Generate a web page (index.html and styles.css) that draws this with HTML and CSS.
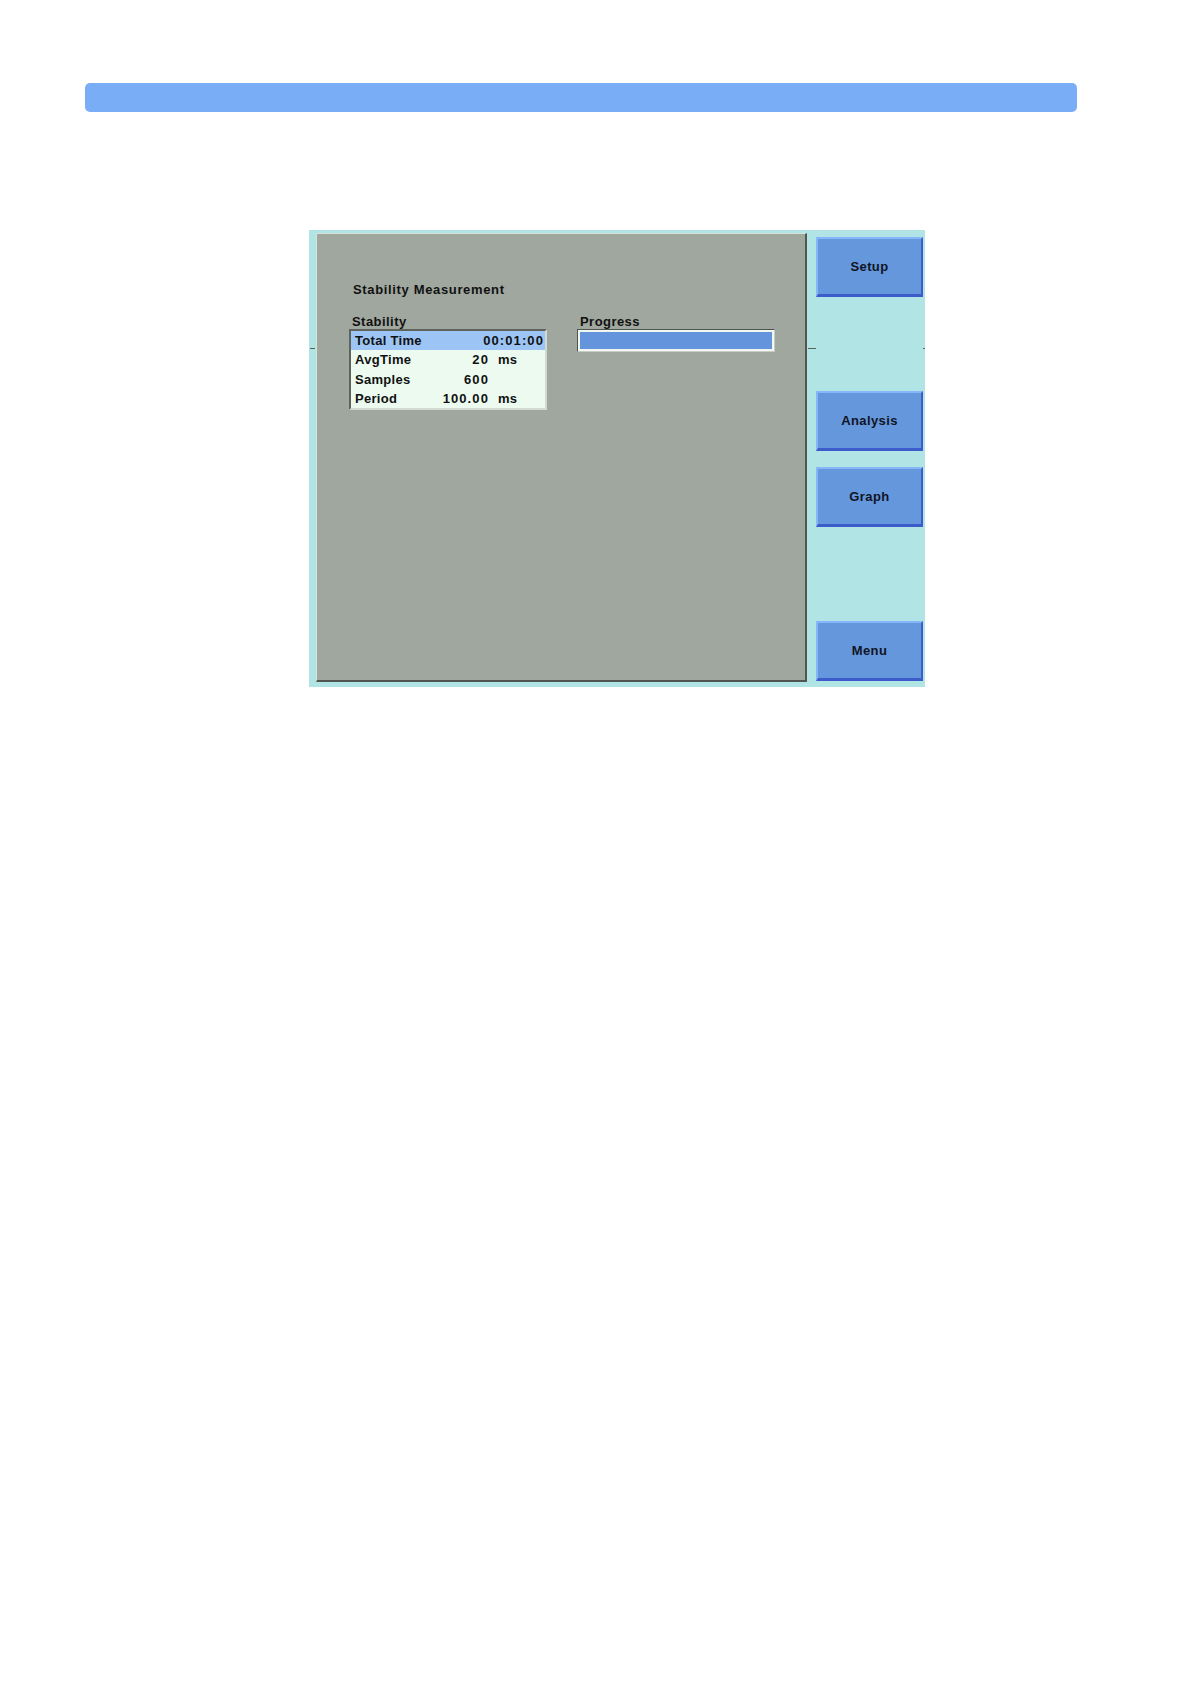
FILE: index.html
```html
<!DOCTYPE html>
<html>
<head>
<meta charset="utf-8">
<link rel="stylesheet" href="styles.css">
</head>
<body>
<div class="topbar"></div>
<div class="frame">
  <span class="tick tick-left"></span>
  <span class="tick tick-mid"></span>
  <span class="tick tick-right"></span>
  <div class="panel">
    <div class="title">Stability Measurement</div>
    <div class="groups">
      <div class="group">
        <div class="label">Stability</div>
        <div class="table">
          <div class="row sel"><span class="k">Total Time</span><span class="v wide">00:01:00</span></div>
          <div class="row"><span class="k">AvgTime</span><span class="v">20</span><span class="u">ms</span></div>
          <div class="row"><span class="k">Samples</span><span class="v">600</span><span class="u"></span></div>
          <div class="row"><span class="k">Period</span><span class="v">100.00</span><span class="u">ms</span></div>
        </div>
      </div>
      <div class="group">
        <div class="label">Progress</div>
        <div class="progress"><div class="fill"></div></div>
      </div>
    </div>
  </div>
  <div class="buttons">
    <div class="btn">Setup</div>
    <div class="slot"></div>
    <div class="btn">Analysis</div>
    <div class="btn">Graph</div>
    <div class="slot"></div>
    <div class="btn">Menu</div>
  </div>
</div>
</body>
</html>
```

FILE: styles.css
```css
html, body {
  margin: 0;
  padding: 0;
  background: #ffffff;
}
body {
  font-family: "Liberation Sans", Arial, sans-serif;
  padding-top: 83px;
}
.topbar {
  margin-left: 85px;
  width: 992px;
  height: 29px;
  background: #79adf6;
  border-radius: 5px;
}
.frame {
  position: relative;
  margin-top: 118px;
  margin-left: 309px;
  width: 616px;
  height: 457px;
  box-sizing: border-box;
  background: #b1e4e4;
  padding: 3px 2px 5px 7px;
  display: flex;
  gap: 9px;
}
.tick {
  position: absolute;
  top: 118px;
  height: 1px;
  background: #5a625a;
}
.tick-left { left: 1px; width: 5px; }
.tick-mid { left: 499px; width: 8px; }
.tick-right { left: 614px; width: 2px; }
.panel {
  box-sizing: border-box;
  width: 491px;
  height: 449px;
  background: #a0a79f;
  border-top: 1px solid #d9e2d9;
  border-left: 1px solid #d9e2d9;
  border-right: 2px solid #4f574f;
  border-bottom: 2px solid #4f574f;
  padding: 48px 0 0 32px;
  color: #111;
  font-weight: bold;
  font-size: 13px;
}
.title {
  line-height: 16px;
  padding-left: 4px;
  letter-spacing: 0.65px;
}
.groups {
  display: flex;
  gap: 30px;
  margin-top: 16px;
}
.group {
  width: 198px;
}
.label {
  line-height: 15px;
  padding-left: 3px;
  letter-spacing: 0.45px;
}
.table {
  box-sizing: border-box;
  width: 198px;
  border-top: 2px solid #5c645c;
  border-left: 2px solid #5c645c;
  border-right: 2px solid #d2dad2;
  border-bottom: 2px solid #d2dad2;
  background: #ecfaf0;
}
.row {
  display: flex;
  height: 19.25px;
  line-height: 19px;
  padding-left: 4px;
  letter-spacing: 0.3px;
}
.row.sel {
  background: #9cc5f5;
}
.k {
  width: 84px;
}
.v {
  width: 50px;
  text-align: right;
  letter-spacing: 1.1px;
}
.v.wide {
  flex: 1;
  padding-right: 1px;
}
.u {
  margin-left: 9px;
}
.progress {
  box-sizing: border-box;
  width: 198px;
  height: 23px;
  border-top: 1px solid #4c544c;
  border-left: 1px solid #4c544c;
  border-right: 1px solid #c4ccc4;
  border-bottom: 1px solid #c4ccc4;
  padding: 1px;
  background: #f4f8f4;
}
.fill {
  height: 100%;
  box-sizing: border-box;
  border: 1px solid #f0f4f0;
  background: #6495dc;
}
.buttons {
  margin-top: 4px;
  width: 107px;
  display: grid;
  grid-template-rows: repeat(6, 60px);
  row-gap: 16.8px;
  align-content: start;
}
.btn {
  box-sizing: border-box;
  background: #6597dd;
  border-top: 2px solid #86b6f9;
  border-left: 2px solid #86b6f9;
  border-right: 2px solid #3d5ccc;
  border-bottom: 3px solid #3d5ccc;
  display: flex;
  align-items: center;
  justify-content: center;
  font-weight: bold;
  font-size: 13px;
  color: #101424;
  letter-spacing: 0.4px;
}
```
